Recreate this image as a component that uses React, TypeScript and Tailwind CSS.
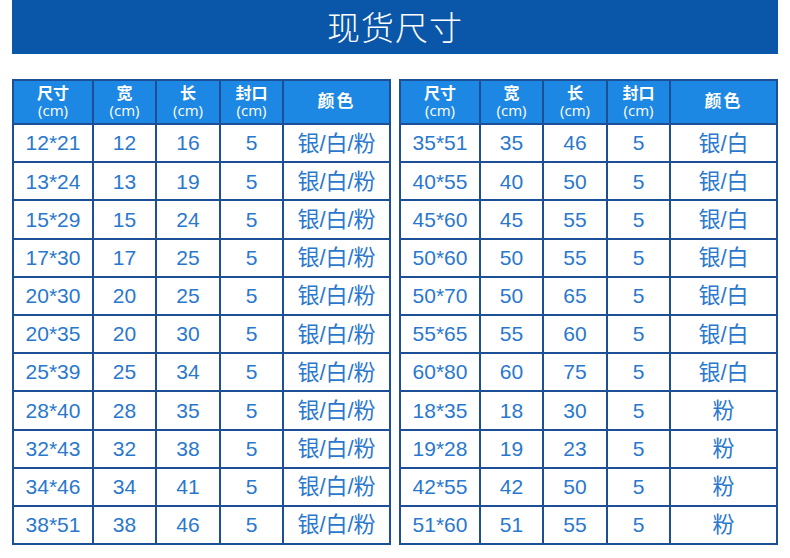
const left: string[][] = [
  ['12*21', '12', '16', '5', '银/白/粉'],
  ['13*24', '13', '19', '5', '银/白/粉'],
  ['15*29', '15', '24', '5', '银/白/粉'],
  ['17*30', '17', '25', '5', '银/白/粉'],
  ['20*30', '20', '25', '5', '银/白/粉'],
  ['20*35', '20', '30', '5', '银/白/粉'],
  ['25*39', '25', '34', '5', '银/白/粉'],
  ['28*40', '28', '35', '5', '银/白/粉'],
  ['32*43', '32', '38', '5', '银/白/粉'],
  ['34*46', '34', '41', '5', '银/白/粉'],
  ['38*51', '38', '46', '5', '银/白/粉'],
]

const right: string[][] = [
  ['35*51', '35', '46', '5', '银/白'],
  ['40*55', '40', '50', '5', '银/白'],
  ['45*60', '45', '55', '5', '银/白'],
  ['50*60', '50', '55', '5', '银/白'],
  ['50*70', '50', '65', '5', '银/白'],
  ['55*65', '55', '60', '5', '银/白'],
  ['60*80', '60', '75', '5', '银/白'],
  ['18*35', '18', '30', '5', '粉'],
  ['19*28', '19', '23', '5', '粉'],
  ['42*55', '42', '50', '5', '粉'],
  ['51*60', '51', '55', '5', '粉'],
]

const heads = ['尺寸', '宽', '长', '封口']

function SizeTable({ rows }: { rows: string[][] }) {
  return (
    <table className="w-full table-fixed border-collapse border-2 border-[#1c4f95]">
      <colgroup>
        <col className="w-[80px]" />
        <col className="w-[63px]" />
        <col className="w-[64px]" />
        <col className="w-[63px]" />
        <col />
      </colgroup>
      <thead>
        <tr className="h-[44px] bg-[#1d87e4] text-white font-bold">
          {heads.map((h) => (
            <th key={h} className="border-2 border-[#1c4f95] p-0 align-middle">
              <div className="text-[16px] leading-[17px]">{h}</div>
              <div className="text-[15px] leading-[17px] font-normal" style={{ fontFamily: '"Open Sans", sans-serif' }}>
                (cm)
              </div>
            </th>
          ))}
          <th className="border-2 border-[#1c4f95] p-0 text-[17px] tracking-[2px]">颜色</th>
        </tr>
      </thead>
      <tbody>
        {rows.map((r, i) => (
          <tr key={i} className="h-[38.2px]">
            {r.map((c, j) => (
              <td
                key={j}
                className={`border-2 border-[#1c4f95] p-0 text-center text-[#2a78cd] ${j === 4 ? 'text-[22px]' : 'text-[21px]'}`}
              >
                {c}
              </td>
            ))}
          </tr>
        ))}
      </tbody>
    </table>
  )
}

export default function App() {
  return (
    <div
      className="w-[790px] h-[558px] bg-white px-3 overflow-hidden"
      style={{ fontFamily: '"Liberation Sans", "Noto Sans CJK SC", sans-serif' }}
    >
      {/* Title */}
      <div className="h-[54px] bg-[#0a56a8] flex items-center justify-center">
        <span className="text-white text-[33px] font-light tracking-[1px]" style={{ fontFamily: '"Noto Sans CJK SC", sans-serif' }}>
          现货尺寸
        </span>
      </div>

      {/* Tables */}
      <div className="mt-[25px] flex gap-2">
        <div className="w-[379px]">
          <SizeTable rows={left} />
        </div>
        <div className="w-[379px]">
          <SizeTable rows={right} />
        </div>
      </div>
    </div>
  )
}
